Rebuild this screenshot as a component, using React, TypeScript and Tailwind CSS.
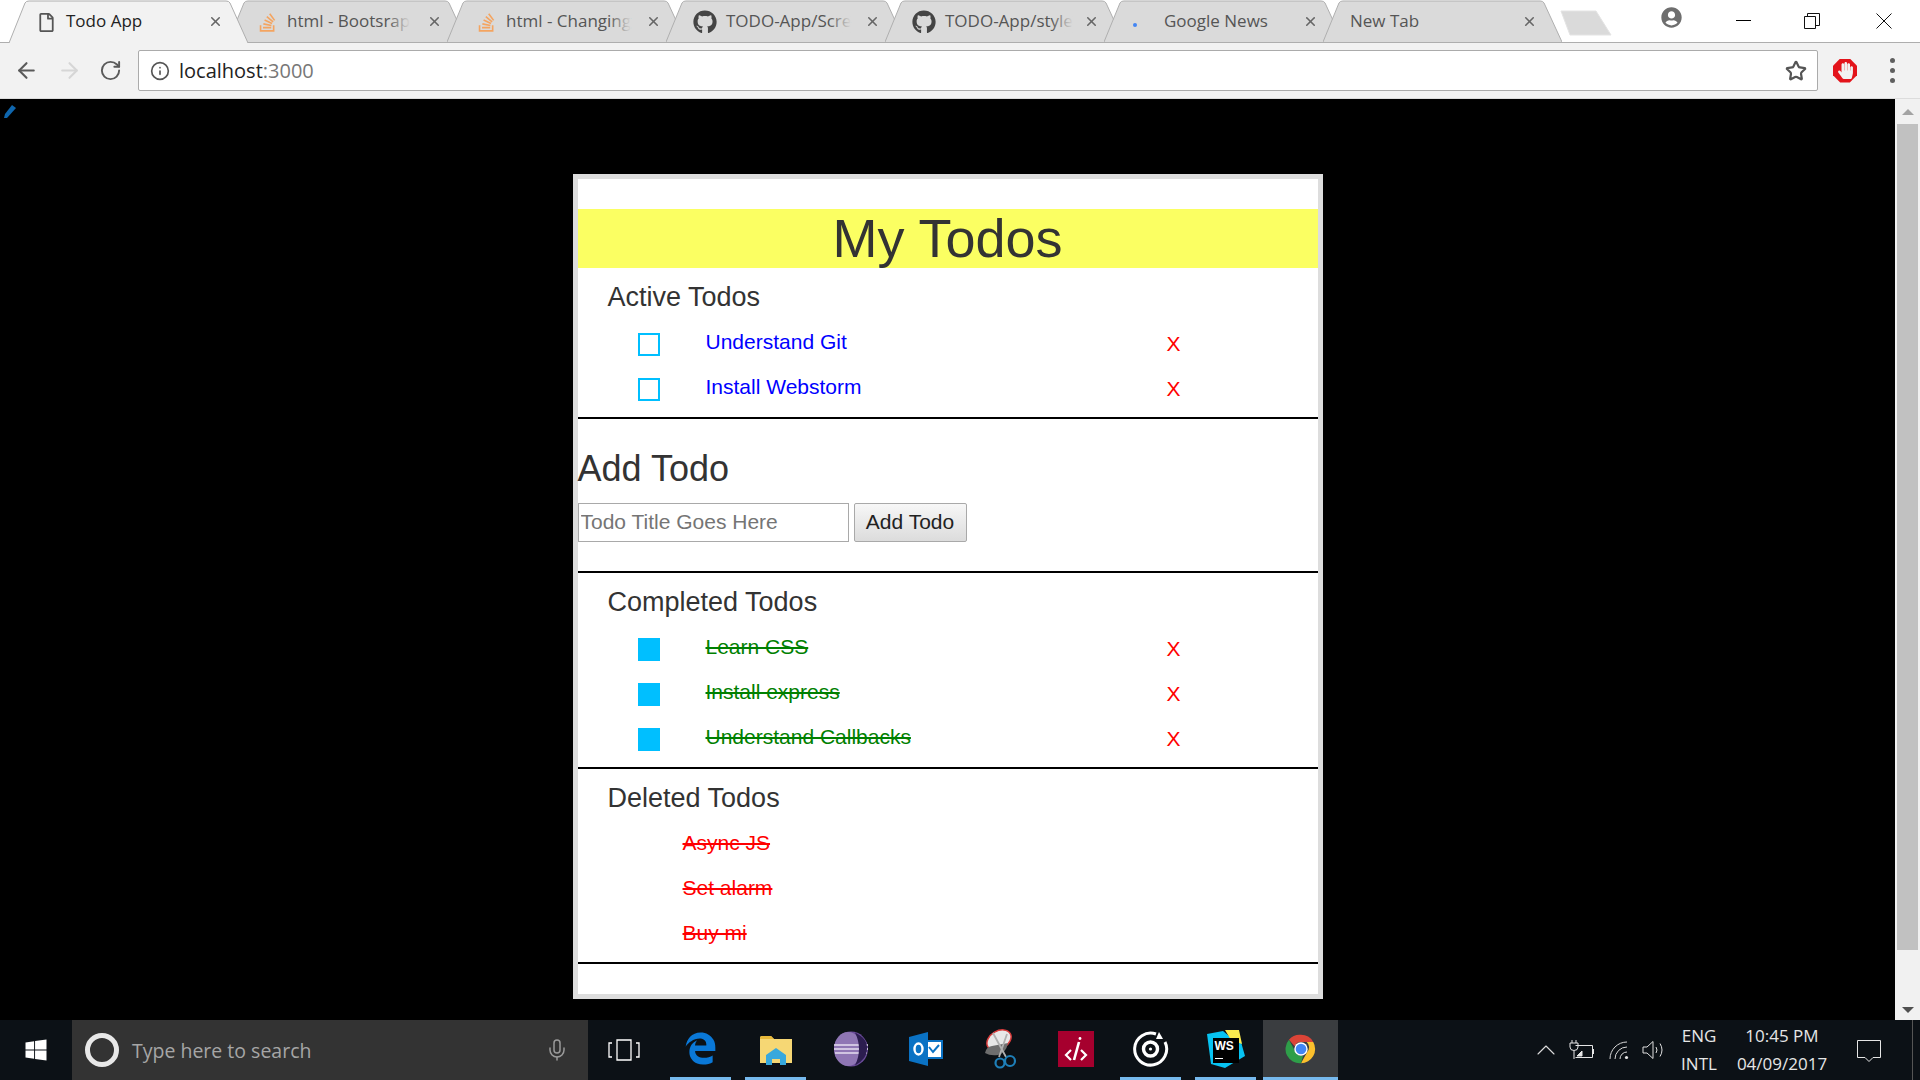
import { ArrowLeft, ArrowRight, ChevronUp, Info, Mic, RotateCw, Star, X } from "lucide-react";
import { FaGithub, FaHandPaper, FaRegFile, FaStackOverflow, FaUserCircle, FaWindows } from "react-icons/fa";
import { FaEdgeLegacy } from "react-icons/fa6";
import type { ReactNode } from "react";

const uiFont = "font-['Open_Sans','Noto_Sans',sans-serif]";

const tabs: { title: string; icon: ReactNode; active?: boolean; fade?: boolean; iconLeft: number; textLeft: number }[] = [
    { title: "Todo App", icon: <FaRegFile className="text-[#555]" size={19} />, active: true, iconLeft: 28, textLeft: 57 },
    { title: "html - Bootsrap", icon: <FaStackOverflow className="text-[#f4a460]" size={21} />, fade: true, iconLeft: 29, textLeft: 59 },
    { title: "html - Changing", icon: <FaStackOverflow className="text-[#f4a460]" size={21} />, fade: true, iconLeft: 29, textLeft: 59 },
    { title: "TODO-App/Scre", icon: <FaGithub className="text-[#444]" size={24} />, fade: true, iconLeft: 27, textLeft: 60 },
    { title: "TODO-App/style", icon: <FaGithub className="text-[#444]" size={24} />, fade: true, iconLeft: 27, textLeft: 60 },
    { title: "Google News", icon: <span className="ml-[5px] mt-[6px] block h-[4px] w-[4px] rounded-full bg-[#4285f4]" />, iconLeft: 24, textLeft: 60 },
    { title: "New Tab", icon: null, iconLeft: 27, textLeft: 27 },
];

function Tab({ title, icon, active, fade, iconLeft, textLeft }: (typeof tabs)[number]) {
    return (
        <div className={`relative -mr-[20px] w-[239px] shrink-0 ${active ? "z-10 h-[43px] text-[#222]" : "h-[42px] text-[#555]"}`}>
            <svg className="absolute inset-0 h-full w-full" viewBox="0 0 239 43" preserveAspectRatio="none">
                <path d="M0 43 L16 3 Q17 1 20 1 L217 1 Q220 1 221 3 L239 43" fill={active ? "#f2f2f2" : "#dadada"} stroke="#aeaeae" strokeWidth="1" />
            </svg>
            <span className="absolute top-[10px] flex h-[24px] w-[24px] items-center" style={{ left: iconLeft }}>{icon}</span>
            <span className={`absolute top-[9px] whitespace-nowrap text-[17px] leading-[24px] ${uiFont}`} style={{ left: textLeft }}>
                {title}
                {fade && <span className="absolute right-0 top-0 h-full w-[22px] bg-gradient-to-l from-[#dadada] to-transparent" />}
            </span>
            <X className="absolute left-[199px] top-[14px] text-[#666]" size={15} strokeWidth={2.5} />
        </div>
    );
}

function TitleBar() {
    return (
        <div className="flex h-[43px] items-start border-b border-[#aeaeae] bg-white pl-[9px]">
            {tabs.map((t) => <Tab key={t.title} {...t} />)}
            <svg className="ml-[18px] mt-[10px] shrink-0" width="52" height="26" viewBox="0 0 52 26">
                <path d="M1 1 L36 1 L51 25 L10 25 Z" fill="#dadada" stroke="#e4e4e4" strokeLinejoin="round" />
            </svg>
            <div className="ml-[49px] mt-[7px] w-[22px] shrink-0 text-[#6e6e6e]"><FaUserCircle size={21} /></div>
            <div className="ml-[53px] mt-[20px] h-px w-[15px] shrink-0 bg-black" />
            <svg className="ml-[53px] mt-[13px] shrink-0" width="16" height="16" viewBox="0 0 16 16" fill="none" stroke="#111">
                <path d="M0.5 3.5 H11.5 V15.5 H0.5 Z M3.5 3.5 V0.5 H15.5 V12.5 H11.5" />
            </svg>
            <svg className="ml-[56px] mt-[13px] shrink-0" width="16" height="16" viewBox="0 0 16 16" stroke="#111">
                <path d="M0.5 0.5 L15.5 15.5 M15.5 0.5 L0.5 15.5" />
            </svg>
        </div>
    );
}

function Toolbar() {
    return (
        <div className="flex h-[56px] items-center border-b border-[#dcdcdc] bg-[#f2f2f2]">
            <div className="flex w-[138px] items-center pl-[14px]">
                <ArrowLeft className="text-[#5a5a5a]" size={25} strokeWidth={2} />
                <ArrowRight className="ml-[18px] text-[#d6d6d6]" size={25} strokeWidth={2} />
                <RotateCw className="ml-[17px] text-[#5a5a5a]" size={23} strokeWidth={2} />
            </div>
            <div className="flex h-[41px] w-[1680px] items-center rounded-[2px] border border-[#ababab] bg-white pl-[11px] pr-[10px]">
                <Info className="text-[#555]" size={20} strokeWidth={2} />
                <span className={`ml-[9px] flex-1 text-[20px] text-[#222] ${uiFont}`}>
                    localhost<span className="text-[#777]">:3000</span>
                </span>
                <Star className="text-[#555]" size={22} strokeWidth={2.4} />
            </div>
            <div className="ml-[15px] flex h-[24px] w-[24px] items-center justify-center bg-[#e3141b] [clip-path:polygon(30%_0,70%_0,100%_30%,100%_70%,70%_100%,30%_100%,0_70%,0_30%)]">
                <FaHandPaper className="text-[#f2f2f2]" size={17} />
            </div>
            <div className="ml-[33px] flex flex-col gap-[5px]">
                <span className="block h-[5px] w-[5px] rounded-full bg-[#5f5f5f]" />
                <span className="block h-[5px] w-[5px] rounded-full bg-[#5f5f5f]" />
                <span className="block h-[5px] w-[5px] rounded-full bg-[#5f5f5f]" />
            </div>
        </div>
    );
}

function Heading({ children }: { children: ReactNode }) {
    return <h3 className="flex h-[54px] items-center pl-[30px] pt-[4px] text-[27px] text-[#333]">{children}</h3>;
}

function TodoRow({ title, done }: { title: string; done?: boolean }) {
    return (
        <div className="flex h-[45px] items-center pl-[60px]">
            <span className={`h-[23px] w-[22px] border-2 border-[#00bfff] ${done ? "bg-[#00bfff]" : "bg-white"}`} />
            <span className={`ml-[46px] w-[461px] pb-[5px] text-[21px] ${done ? "text-[#008000] line-through" : "text-[#0000ff]"}`}>{title}</span>
            <span className="pb-[2px] text-[21px] text-[#ff0000]">X</span>
        </div>
    );
}

function DeletedRow({ title }: { title: string }) {
    return (
        <div className="flex h-[45px] items-center pb-[5px] pl-[105px] text-[21px] text-[#ff0000] line-through">{title}</div>
    );
}

function TodoCard() {
    return (
        <div className="mx-auto mt-[75px] w-[750px] border-[5px] border-[#dddddd] bg-white pt-[30px] font-['Liberation_Sans',Arial,sans-serif]">
            <h1 className="h-[59px] bg-[#fbff62] text-center text-[54px] leading-[59px] text-[#333]">My Todos</h1>
            <Heading>Active Todos</Heading>
            <TodoRow title="Understand Git" />
            <TodoRow title="Install Webstorm" />
            <hr className="mt-[5px] h-[2px] border-0 bg-black" />
            <h2 className="flex h-[84px] items-center pt-[16px] text-[36px] text-[#333]">Add Todo</h2>
            <div className="flex h-[39px] gap-[5px]">
                <input
                    className="h-[39px] w-[271px] border border-[#a9a9a9] px-[2px] pb-[2px] text-[21px] text-[#333] outline-none placeholder:text-[#757575]"
                    placeholder="Todo Title Goes Here"
                />
                <button className="h-[39px] w-[113px] rounded-[2px] border border-[#a9a9a9] bg-gradient-to-b from-[#f7f7f7] to-[#dcdcdc] pb-[2px] text-[21px] text-[#222]">Add Todo</button>
            </div>
            <hr className="mt-[29px] h-[2px] border-0 bg-black" />
            <Heading>Completed Todos</Heading>
            <TodoRow title="Learn CSS" done />
            <TodoRow title="Install express" done />
            <TodoRow title="Understand Callbacks" done />
            <hr className="mt-[5px] h-[2px] border-0 bg-black" />
            <Heading>Deleted Todos</Heading>
            <DeletedRow title="Async JS" />
            <DeletedRow title="Set alarm" />
            <DeletedRow title="Buy mi" />
            <hr className="mt-[4px] h-[2px] border-0 bg-black" />
            <div className="h-[30px]" />
        </div>
    );
}

function Scrollbar() {
    return (
        <div className="flex w-[25px] shrink-0 flex-col items-center bg-[#f1f1f1]">
            <div className="flex h-[25px] items-center"><div className="h-0 w-0 border-x-[6px] border-b-[6px] border-x-transparent border-b-[#a3a3a3]" /></div>
            <div className="h-[826px] w-[21px] bg-[#c1c1c1]" />
            <div className="flex flex-1 items-end pb-[7px]"><div className="h-0 w-0 border-x-[6px] border-t-[6px] border-x-transparent border-t-[#505050]" /></div>
        </div>
    );
}

function AppTile({ children, open, active }: { children: ReactNode; open?: boolean; active?: boolean }) {
    return (
        <div className={`flex h-[60px] w-[75px] flex-col items-center ${active ? "bg-[#3a3d40]" : ""}`}>
            <div className="flex flex-1 items-center justify-center">{children}</div>
            <div className={`h-[3px] ${active ? "w-full bg-[#76b9ed]" : open ? "w-[61px] bg-[#76b9ed]" : ""}`} />
        </div>
    );
}

function Taskbar() {
    return (
        <div className={`flex h-[60px] bg-[#0c1116] text-[#e6e6e6] ${uiFont}`}>
            <div className="flex w-[72px] items-center justify-center"><FaWindows className="text-white" size={24} /></div>
            <div className="flex h-full w-[516px] items-center bg-[#333333] pl-[13px]">
                <span className="h-[34px] w-[34px] rounded-full border-[5px] border-[#e8e8e8]" />
                <span className="ml-[13px] flex-1 pt-[2px] text-[19.5px] text-[#a6a6a6]">Type here to search</span>
                <Mic className="mr-[19px] text-[#9a9a9a]" size={24} strokeWidth={1.5} />
            </div>
            <div className="flex w-[72px] items-center justify-center">
                <svg width="32" height="26" viewBox="0 0 32 26" fill="none" stroke="#fff" strokeWidth="1.3">
                    <path d="M9 3 H23 V23 H9 Z M4 6 H1 V20 H4 M28 6 H31 V20 H28" />
                </svg>
            </div>
            <div className="w-[3px]" />
            <AppTile open><FaEdgeLegacy className="text-[#0a78d7]" size={33} /></AppTile>
            <AppTile open>
                <svg width="32" height="32" viewBox="0 0 32 32">
                    <path d="M0 5 Q0 3 2 3 H11 L14 6 H32 V30 H0 Z" fill="#f6d774" />
                    <path d="M0 5 Q0 3 2 3 H11 L14 6 H0 Z" fill="#e8b93a" />
                    <path d="M6 32 V22 L16 15 L26 22 V32 H20 V26 H12 V32 Z" fill="#38a8dd" />
                </svg>
            </AppTile>
            <AppTile>
                <svg width="36" height="36" viewBox="0 0 36 36">
                    <ellipse cx="18" cy="18" rx="17" ry="17.5" fill="#6b4c9a" />
                    <ellipse cx="15" cy="18" rx="14" ry="17" fill="#8f76b4" />
                    <path d="M1 14 H35 M1 18 H35 M2 22 H34" stroke="#e6def0" strokeWidth="1.4" />
                    <path d="M22 1.5 Q35 8 34 18 Q34 28 22 34.5 Q30 18 22 1.5" fill="#2c1d4f" />
                </svg>
            </AppTile>
            <AppTile>
                <svg width="34" height="34" viewBox="0 0 34 34">
                    <path d="M16 9 H33 V26 H16 Z" fill="#fff" stroke="#0a72c4" strokeWidth="2" />
                    <path d="M20 15 L24 20 L30 13" fill="none" stroke="#0a72c4" strokeWidth="2" />
                    <path d="M0 5 L19 0 V34 L0 29 Z" fill="#0a72c4" />
                    <ellipse cx="9.5" cy="17" rx="4" ry="5.5" fill="none" stroke="#fff" strokeWidth="2.4" />
                </svg>
            </AppTile>
            <AppTile>
                <svg width="34" height="40" viewBox="0 0 34 40" fill="none">
                    <ellipse cx="15" cy="11" rx="13" ry="9" transform="rotate(-30 15 11)" fill="#e8e8e8" stroke="#d83b3b" strokeWidth="1.5" />
                    <path d="M1 24 Q2 18 8 17 L24 14 Q22 24 14 26 Q6 27 1 24 Z" fill="#6e6e6e" />
                    <path d="M9 4 L22 28 M23 5 L15 28" stroke="#b0b0b0" strokeWidth="1.8" />
                    <circle cx="26" cy="32" r="5" stroke="#1e7fb8" strokeWidth="2.2" />
                    <circle cx="16" cy="34" r="4.5" stroke="#1e7fb8" strokeWidth="2.2" />
                </svg>
            </AppTile>
            <AppTile>
                <div className="flex h-[36px] w-[36px] items-center justify-center bg-[#a6002e]">
                    <svg width="24" height="26" viewBox="0 0 24 26" fill="none" stroke="#fff" strokeWidth="2.2">
                        <path d="M7 14 L2 19 L7 24 M17 14 L22 19 L17 24" />
                        <path d="M10 24 L15 6" strokeWidth="2.6" />
                        <circle cx="16" cy="2.5" r="1.4" fill="#fff" strokeWidth="0" />
                    </svg>
                </div>
            </AppTile>
            <AppTile open>
                <svg width="37" height="37" viewBox="0 0 37 37" fill="none" stroke="#fff">
                    <path d="M24 4 A16 16 0 1 0 33 12" strokeWidth="3" />
                    <path d="M27 2 L24 9 L31 9 Z" fill="#fff" strokeWidth="0" />
                    <circle cx="18.5" cy="19" r="7" strokeWidth="3.4" />
                    <circle cx="18.5" cy="19" r="1.6" fill="#fff" strokeWidth="0" />
                </svg>
            </AppTile>
            <AppTile open>
                <div className="relative h-[38px] w-[38px]">
                    <svg className="absolute inset-0" width="38" height="38" viewBox="0 0 38 38">
                        <path d="M0 4 L16 1 L22 6 L30 0 L34 12 L38 26 L18 38 L4 34 Z" fill="#07c3f2" />
                        <path d="M18 0 L32 0 L35 14 L24 10 Z" fill="#f9e94e" />
                    </svg>
                    <div className="absolute left-[6px] top-[8px] h-[25px] w-[26px] bg-black pl-[2px] pt-[2px] font-['Liberation_Sans',sans-serif] text-[12px] font-bold leading-[12px] text-white">
                        WS
                        <div className="mt-[6px] h-[1px] w-[8px] bg-white" />
                    </div>
                </div>
            </AppTile>
            <AppTile active>
                <svg width="34" height="34" viewBox="0 0 48 48">
                    <path d="M24 4 A20 20 0 0 1 41.3 14 H24 A10 10 0 0 0 15 20 L7 11 A20 20 0 0 1 24 4" fill="#db4437" />
                    <path d="M41.3 14 A20 20 0 0 1 24 44 L33 28 A10 10 0 0 0 32 14 Z" fill="#fbc02d" />
                    <path d="M24 44 A20 20 0 0 1 7 11 L16 28 A10 10 0 0 0 27 33.5 Z" fill="#2e9e49" />
                    <circle cx="24" cy="24" r="9.5" fill="#fff" />
                    <circle cx="24" cy="24" r="7.5" fill="#4285f4" />
                </svg>
            </AppTile>
            <div className="w-[190px]" />
            <div className="flex w-[36px] items-center justify-center"><ChevronUp className="text-[#ddd]" size={32} strokeWidth={0.8} /></div>
            <div className="flex w-[36px] items-center justify-center">
                <svg width="26" height="20" viewBox="0 0 26 20" fill="none" stroke="#e6e6e6">
                    <path d="M6.5 5.5 H23.5 V17.5 H6.5 M24.5 9 V14" />
                    <path d="M1 3 H9 V7 Q9 10.5 5 10.5 Q1 10.5 1 7 Z M3 0 V3 M7 0 V3 M5 11 V19" />
                    <path d="M8 16 L13 11 V16 Z" fill="#e6e6e6" />
                </svg>
            </div>
            <div className="flex w-[38px] items-center justify-center">
                <svg width="20" height="20" viewBox="0 0 20 20" fill="none" stroke="#d8d8d8">
                    <path d="M1 19 A17 17 0 0 1 18 2 M6 19 A12 12 0 0 1 18 7 M11 19 A7 7 0 0 1 18 12" />
                    <circle cx="17.5" cy="17.5" r="1.6" fill="#e6e6e6" strokeWidth="0" />
                </svg>
            </div>
            <div className="flex w-[32px] items-center justify-center">
                <svg width="24" height="20" viewBox="0 0 24 20" fill="none" stroke="#e0e0e0">
                    <path d="M1 7 H5 L11 1.5 V18.5 L5 13 H1 Z" />
                    <path d="M14 7 Q16 10 14 13 M18 3.5 Q22 10 18 16.5" />
                </svg>
            </div>
            <div className="flex w-[58px] flex-col items-center pt-[2px] text-[17px] leading-[28px]">
                <span>ENG</span>
                <span>INTL</span>
            </div>
            <div className="flex w-[108px] flex-col items-center pt-[2px] text-[17px] leading-[28px]">
                <span>10:45 PM</span>
                <span>04/09/2017</span>
            </div>
            <div className="flex w-[66px] items-center justify-center">
                <svg width="26" height="26" viewBox="0 0 26 26" fill="none" stroke="#e6e6e6">
                    <path d="M1.5 3.5 H24.5 V20.5 H17 L13 24.5 L9 20.5 H1.5 Z" />
                </svg>
            </div>
            <div className="w-[10px]" />
            <div className="w-px bg-[#555]" />
        </div>
    );
}

export default function App() {
    return (
        <div className="flex h-[1080px] w-[1920px] flex-col overflow-hidden bg-black">
            <TitleBar />
            <Toolbar />
            <div className="flex h-[921px] shrink-0">
                <div className="relative flex-1">
                    <svg className="absolute left-[3px] top-[5px]" width="14" height="15" viewBox="0 0 14 15">
                        <path d="M9 1 L13 4 L4 14 L1 14 L2 10 Z" fill="#0f66ad" />
                    </svg>
                    <TodoCard />
                </div>
                <Scrollbar />
            </div>
            <Taskbar />
        </div>
    );
}
